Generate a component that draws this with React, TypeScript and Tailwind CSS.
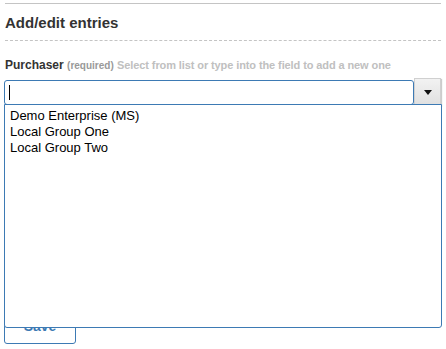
const options = ['Demo Enterprise (MS)', 'Local Group One', 'Local Group Two'];

export default function App() {
  return (
    <div
      className="h-[349px] w-[446px] overflow-hidden bg-white pt-[3px] pl-[4px]"
      style={{ fontFamily: '"Liberation Sans", Arial, sans-serif' }}
    >
      <div className="w-[437px]">
        <div className="ml-[1px] border-t border-[#c4c4c4]" />
        <h2 className="ml-[1px] mt-[10px] text-[15px] leading-[17px] font-bold text-[#333]">
          Add/edit entries
        </h2>
        <div className="ml-[1px] mt-[9px] border-t border-dashed border-[#c4c4c4]" />

        <div className="ml-[1px] mt-[17px] text-[12px] leading-[14px] font-bold">
          <span className="text-[#333]">Purchaser</span>{' '}
          <span className="text-[10px] text-[#999]">(required)</span>{' '}
          <span className="text-[11px] tracking-[-0.1px] text-[#c0c0c0]">
            Select from list or type into the field to add a new one
          </span>
        </div>

        <div className="relative mt-[5px]">
          <div className="flex items-center">
            <div className="flex h-[25px] w-[412px] items-center rounded-[3px] border border-[#3d7ab4] px-[4px]">
              <span className="h-[15px] w-[1px] bg-black" />
            </div>
            <button className="flex h-[28px] w-[27px] items-center justify-center border border-[#d0d0d0] bg-gradient-to-b from-[#f2f2f2] to-[#e0e0e0] shadow-[1px_1px_1px_rgba(0,0,0,0.2)]">
              <svg width="8" height="5" viewBox="0 0 8 5">
                <path d="M0 0 H8 L4 5 Z" fill="#111" />
              </svg>
            </button>
          </div>

          <ul className="absolute top-[26px] left-0 z-10 h-[224px] w-[438px] rounded-b-[3px] border border-[#3d7ab4] bg-white pt-[3px] pl-[5px] text-[13px] leading-[16px] text-black">
            {options.map((o) => (
              <li key={o}>{o}</li>
            ))}
          </ul>

          <button className="mt-[207px] flex h-[31px] w-[72px] items-start justify-center rounded-[3px] border border-[#3d7ab4] pt-[4px] text-[14px] leading-[16px] font-bold text-[#3d7ab4]">
            Save
          </button>
        </div>
      </div>
    </div>
  );
}
